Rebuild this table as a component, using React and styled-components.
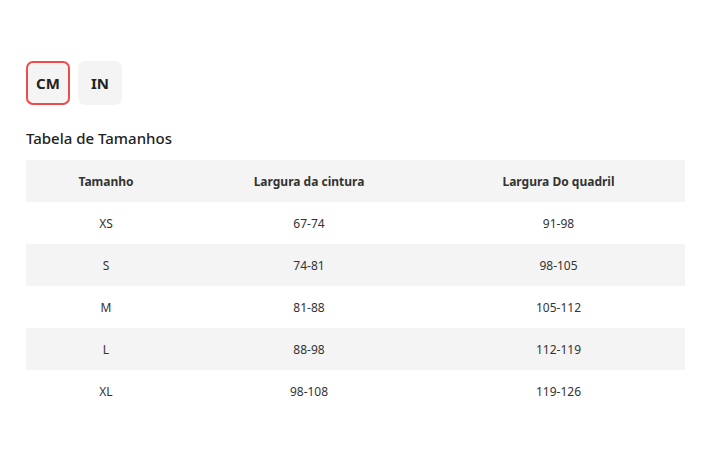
import React, { useState } from 'react';
import styled, { createGlobalStyle } from 'styled-components';

const GlobalStyle = createGlobalStyle`
  body {
    margin: 0;
    background: #fff;
    font-family: "Noto Sans", "Open Sans", sans-serif;
    color: #333;
  }
`;

const Page = styled.div`
  padding: 61px 32px 40px 26px;
`;

const UnitToggle = styled.div`
  display: flex;
  gap: 8px;
`;

const UnitButton = styled.button`
  width: 44px;
  height: 44px;
  box-sizing: border-box;
  border-radius: 7px;
  border: 2px solid ${({ active }) => (active ? '#f04a4a' : 'transparent')};
  background: #f4f4f4;
  font-family: inherit;
  font-size: 15px;
  font-weight: 700;
  color: #222;
  cursor: pointer;
  padding: 0;
`;

const Title = styled.h2`
  margin: 23px 0 12px;
  font-size: 15px;
  font-weight: 500;
  color: #222;
  line-height: 20px;
`;

const Table = styled.table`
  width: 659px;
  border-collapse: collapse;
  table-layout: fixed;
  font-size: 12px;
`;

const HeadCell = styled.th`
  height: 42px;
  padding: 0;
  font-weight: 700;
  color: #333;
  text-align: center;
  background: #f4f4f4;
`;

const Row = styled.tr`
  background: ${({ striped }) => (striped ? '#f4f4f4' : '#fff')};
`;

const Cell = styled.td`
  height: 42px;
  padding: 0;
  text-align: center;
  color: #333;
`;

const sizes = [
  ['XS', '67-74', '91-98'],
  ['S', '74-81', '98-105'],
  ['M', '81-88', '105-112'],
  ['L', '88-98', '112-119'],
  ['XL', '98-108', '119-126'],
];

const App = () => {
  const [unit, setUnit] = useState('CM');

  return (
    <Page>
      <GlobalStyle />
      <UnitToggle>
        {['CM', 'IN'].map((u) => (
          <UnitButton key={u} active={unit === u} onClick={() => setUnit(u)}>
            {u}
          </UnitButton>
        ))}
      </UnitToggle>
      <Title>Tabela de Tamanhos</Title>
      <Table>
        <colgroup>
          <col style={{ width: 160 }} />
          <col style={{ width: 246 }} />
          <col style={{ width: 253 }} />
        </colgroup>
        <thead>
          <tr>
            <HeadCell>Tamanho</HeadCell>
            <HeadCell>Largura da cintura</HeadCell>
            <HeadCell>Largura Do quadril</HeadCell>
          </tr>
        </thead>
        <tbody>
          {sizes.map((row, i) => (
            <Row key={row[0]} striped={i % 2 === 1}>
              {row.map((v, j) => (
                <Cell key={j}>{v}</Cell>
              ))}
            </Row>
          ))}
        </tbody>
      </Table>
    </Page>
  );
};

export default App;
